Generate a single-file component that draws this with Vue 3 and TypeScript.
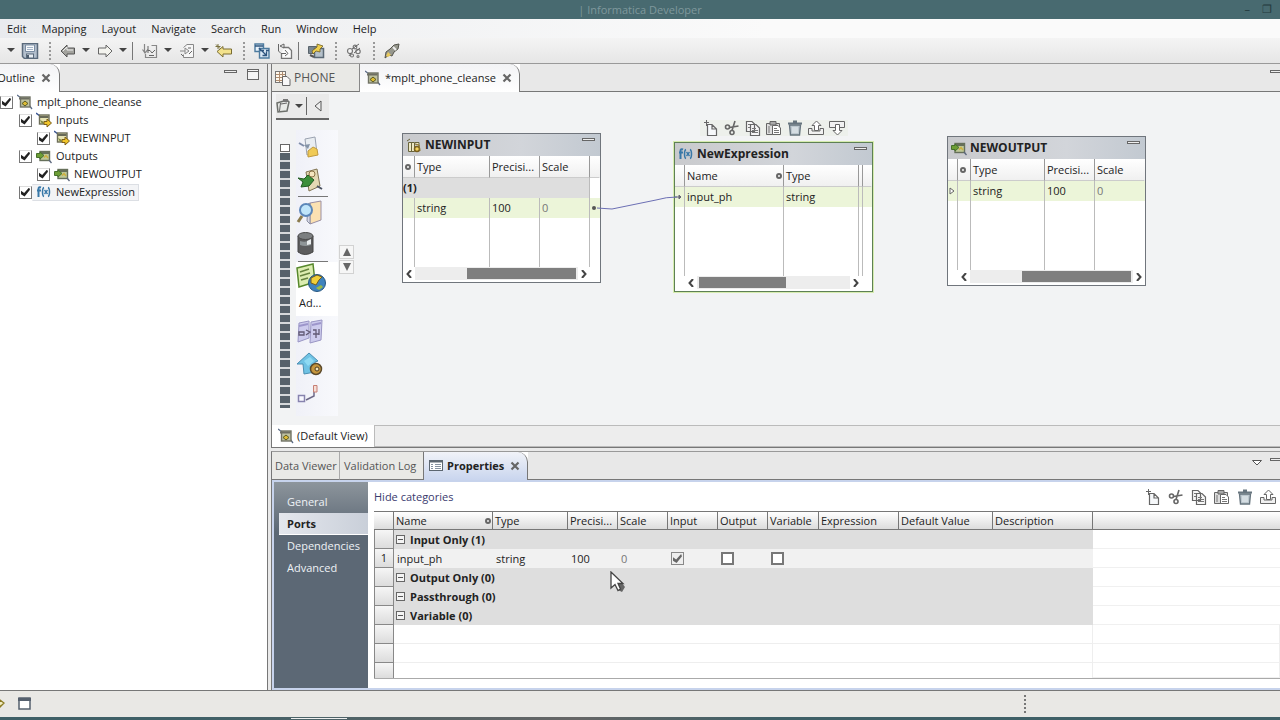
<script setup lang="ts">
import { ref } from 'vue'

interface TreeItem { label: string; icon: string; depth: number; selected?: boolean }
interface Tool { icon: string; label: string; lead?: string; caret?: boolean; small?: boolean }
interface Column { label: string; width: number; sort?: boolean; gutter?: boolean }
interface NodeCard {
  id: string; title: string; icon: string; x: number; y: number; active?: boolean
  columns: Column[]; group?: string; cells: string[]; inset: string; thumb: { left: number; width: number }
}

const menus = ['Edit', 'Mapping', 'Layout', 'Navigate', 'Search', 'Run', 'Window', 'Help']

const tools: Tool[] = [
  { icon: 'save', label: 'Save' },
  { icon: 'back', label: 'Back', lead: 'dots', caret: true },
  { icon: 'forward', label: 'Forward', caret: true },
  { icon: 'page-down', label: 'Next annotation', lead: 'line', caret: true },
  { icon: 'page-up', label: 'Previous annotation', caret: true },
  { icon: 'last-edit', label: 'Last edit location' },
  { icon: 'iconize', label: 'Iconize', lead: 'dots' },
  { icon: 'restore', label: 'Restore' },
  { icon: 'run-map', label: 'Arrange', lead: 'line' },
  { icon: 'link', label: 'Auto link', lead: 'dots' },
  { icon: 'rocket', label: 'Search', lead: 'dots' },
]

const tree: TreeItem[] = [
  { label: 'mplt_phone_cleanse', icon: 'mapplet', depth: 0 },
  { label: 'Inputs', icon: 'input', depth: 1 },
  { label: 'NEWINPUT', icon: 'input', depth: 2 },
  { label: 'Outputs', icon: 'output', depth: 1 },
  { label: 'NEWOUTPUT', icon: 'output', depth: 2 },
  { label: 'NewExpression', icon: 'fx', depth: 1, selected: true },
]
const shown = ref<boolean[]>(tree.map(() => true))

const nodes: NodeCard[] = [
  {
    id: 'in', title: 'NEWINPUT', icon: 'input-port', x: 130, y: 41,
    columns: [
      { label: '', width: 12, sort: true }, { label: 'Type', width: 75 }, { label: 'Precisi...', width: 50 },
      { label: 'Scale', width: 50 }, { label: '', width: 10, gutter: true },
    ],
    group: '(1)', cells: ['', 'string', '100', '0', 'dot'], inset: 'end', thumb: { left: 52, width: 109 },
  },
  {
    id: 'ex', title: 'NewExpression', icon: 'fx', x: 402, y: 50, active: true,
    columns: [
      { label: '', width: 10, gutter: true }, { label: 'Name', width: 99, sort: true }, { label: 'Type', width: 75 },
      { label: '', width: 4 }, { label: '', width: 9, gutter: true },
    ],
    cells: ['arrow', 'input_ph', 'string', '', ''], inset: 'both', thumb: { left: 2, width: 87 },
  },
  {
    id: 'out', title: 'NEWOUTPUT', icon: 'output', x: 675, y: 44,
    columns: [
      { label: '', width: 10, gutter: true }, { label: '', width: 13, sort: true }, { label: 'Type', width: 74 },
      { label: 'Precisi...', width: 50 }, { label: 'Scale', width: 50 },
    ],
    cells: ['tri', '', 'string', '100', '0'], inset: 'start', thumb: { left: 52, width: 109 },
  },
]

const editTools = [
  ['new', 'New'], ['cut', 'Cut'], ['copy', 'Copy'], ['paste', 'Paste'], ['trash', 'Delete'], ['up', 'Move up'], ['down', 'Move down'],
]
const palette = [
  { icon: 'p-object', label: 'Data object' }, { icon: 'p-map', label: 'Mapplet', rule: true },
  { icon: 'p-lookup', label: 'Lookup' }, { icon: 'p-db', label: 'Database', rule: true },
]
const paletteMore = [
  { icon: 'p-compare', label: 'Comparison' }, { icon: 'p-house', label: 'Address' }, { icon: 'p-route', label: 'Router' },
]

const categories = ['General', 'Ports', 'Dependencies', 'Advanced']
const current = ref('Ports')

const portColumns = [
  ['Name', 99], ['Type', 75], ['Precisi...', 50], ['Scale', 50], ['Input', 50], ['Output', 50],
  ['Variable', 51], ['Expression', 80], ['Default Value', 94], ['Description', 100],
] as [string, number][]
const groups = ['Output Only (0)', 'Passthrough (0)', 'Variable (0)']
const inputFlag = ref(true)
const outputFlag = ref(false)
const variableFlag = ref(false)
</script>

<template>
  <svg class="defs" aria-hidden="true">
    <symbol id="i-close" viewBox="0 0 10 10"><path d="M1.500 1.500L8.500 8.500M8.500 1.500L1.500 8.500" stroke="#666" stroke-width="2.200" /></symbol>
    <symbol id="i-min" viewBox="0 0 14 14"><rect x=".5" y="2.500" width="12" height="2" fill="#eee" stroke="#666" /></symbol>
    <symbol id="i-max" viewBox="0 0 14 14"><rect x="1.500" y="1.500" width="11" height="10" fill="#f4f4f4" stroke="#666" /><path d="M1 3.500H13" stroke="#666" /></symbol>
    <symbol id="i-caret" viewBox="0 0 8 5"><path d="M0 0H8L4 4Z" fill="#444" /></symbol>
    <symbol id="i-save" viewBox="0 0 16 16"><path d="M.5 .5H15.500V15.500H2.500L.5 13.500Z" fill="#b3bfcd" stroke="#5a6a7c" stroke-width="1.500" /><path d="M3.500 2H12.500V8.500H3.500Z" fill="#f8fafc" stroke="#7b8da3" /><path d="M5 4.500H11M5 6.500H11" stroke="#a3b4c8" /><rect x="4.500" y="11" width="7" height="4" fill="#e8edf3" stroke="#5a6a7c" /><rect x="5" y="12" width="2" height="3" fill="#4c5c6e" /></symbol>
    <symbol id="i-back" viewBox="0 0 16 16"><path d="M1 8L7 2V5H14.500V11H7V14Z" fill="#a3a39e" stroke="#555" /><path d="M3 8L7 4V7H13" stroke="#eee" fill="none" /></symbol>
    <symbol id="i-forward" viewBox="0 0 16 16"><path d="M15 8L9 2V5H1.500V11H9V14Z" fill="#f3f3ee" stroke="#666" /></symbol>
    <symbol id="i-page-down" viewBox="0 0 16 16"><path d="M9.500 2.500H14.500V14.500H3.500V11M2.500 1V9M.5 6.500L3 10L6 6.500" fill="none" stroke="#888" stroke-width="1.200" /><path d="M6 3V10M6 7.500H8L10 10L13 7M7 12.500H12" fill="none" stroke="#666" /></symbol>
    <symbol id="i-page-up" viewBox="0 0 16 16"><path d="M4.500 4.500L8 1.500H14.500V14.500H4.500V11.500M1 8H6M6 5V11L10 8Z" fill="#f6f6f6" stroke="#888" /><path d="M9 5H12M10 11L13 8M2 11L4 13" stroke="#666" /></symbol>
    <symbol id="i-last-edit" viewBox="0 0 18 16"><path d="M2 8.500L8 3.500V6H16.500V11H8V14Z" fill="#f3e28c" stroke="#7a6d32" /><path d="M3 1V6M.5 3.500H5.500M1 1.500L5 5.500" stroke="#7b7340" /></symbol>
    <symbol id="i-iconize" viewBox="0 0 16 16"><path d="M1 1H9.500V8.500H1Z" fill="#e8f2fb" stroke="#4d7b9f" stroke-width="1.400" /><path d="M5.500 5.500H15V15H5.500Z" fill="#d9e7f4" stroke="#4d7b9f" stroke-width="1.400" /><path d="M5 5L12.500 12.500M12.500 8.500V12.500H8.500M1 3H9M6 7.500H10M12 7.500H15" stroke="#2f557f" stroke-width="1.300" fill="none" /></symbol>
    <symbol id="i-restore" viewBox="0 0 16 16"><path d="M6.500 4.500H11.500L14.500 7.500V15.500H4.500V11" fill="#fbfbfb" stroke="#777" stroke-width="1.300" /><path d="M1.500 1V8L4 10.500H9M3 3L7 1V5ZM8 7L11 10.500L8 13" stroke="#666" fill="none" /></symbol>
    <symbol id="i-run-map" viewBox="0 0 16 16"><path d="M.5 3.500H8.500V10.500H.5Z" fill="#7a8791" stroke="#5a646c" /><path d="M6.500 5.500H15.500V14.500H6.500Z" fill="#b5c0ca" stroke="#5a6875" stroke-width="1.500" /><path d="M4 8L9 4V1L15 3L12 6V9L8 8L5 11Z" fill="#efcf4d" stroke="#6d5e25" stroke-width=".8" /><path d="M2 12L6 14" stroke="#555" stroke-width="2" /></symbol>
    <symbol id="i-link" viewBox="0 0 16 16"><g fill="#f5f5f5" stroke="#777" stroke-width="1.200"><circle cx="4" cy="8" r="2.500" /><circle cx="9" cy="4" r="1.800" /><circle cx="12" cy="8.500" r="2.200" /><circle cx="6" cy="12.500" r="1.500" /><circle cx="12" cy="13.500" r="1" /></g><path d="M6 6L13 1M8 10L14 5M3 13L5 10" stroke="#666" /></symbol>
    <symbol id="i-rocket" viewBox="0 0 16 16"><path d="M1 15L2 9L6 6L10 2L15 1L14 6L10 9L8 13L5 12Z" fill="#96978d" stroke="#55554d" /><path d="M4 9L7 12L4 14L2 13Z" fill="#e9c95b" /><path d="M9 4L12 7" stroke="#eee" stroke-width="2" /></symbol>
    <symbol id="i-mapplet" viewBox="0 0 16 16"><path d="M0 1L4 4M12 11L15 15" stroke="#5c6c88" stroke-width="1.300" /><rect x="3.500" y="3" width="9.500" height="10" fill="#bfc2a0" stroke="#717365" stroke-width="1.400" /><path d="M2 4.500H12.500" stroke="#6d6e62" stroke-width="2" /><path d="M5 9.500L8 7L11 9.500L8 12Z" fill="#dcbb34" stroke="#5a5a22" /></symbol>
    <symbol id="i-input" viewBox="0 0 16 16"><path d="M0 1L4 4" stroke="#3c5794" stroke-width="1.500" /><rect x="3.500" y="3" width="9.500" height="9" fill="#e7e4b4" stroke="#6c6d58" stroke-width="1.400" /><path d="M4 5H12.500" stroke="#686a58" stroke-width="2" /><path d="M4 8L8 10L6 12Z" fill="#7b8740" /><path d="M8 9.500H11V7L15.500 11L11 15V12.500H8Z" fill="#f0c52b" stroke="#7d5f19" /></symbol>
    <symbol id="i-input-port" viewBox="0 0 16 16"><path d="M1 4L4 2M2.500 5.500H8.500V14.500H2.500ZM5.500 6V14M9 5.500H13V9" fill="#eee8c4" stroke="#69643c" /><circle cx="11" cy="12" r="2.500" fill="#f3d35d" stroke="#785e1d" stroke-width="1.500" /><path d="M9 7L13 8L14 14" stroke="#8c7226" fill="none" /></symbol>
    <symbol id="i-output" viewBox="0 0 16 16"><rect x="4" y="3.500" width="9.500" height="9" fill="#bec897" stroke="#66705a" stroke-width="1.400" /><path d="M13 12L15.500 15" stroke="#5b667c" stroke-width="1.300" /><path d="M5 5H13" stroke="#66705a" stroke-width="2" /><path d="M.5 5.500H4V4L8 7.500L4 11V9.500H.5Z" fill="#6d9e35" stroke="#47702c" /><path d="M8 9.500L10 7.500L12 10" stroke="#cdb03d" stroke-width="1.500" fill="none" /></symbol>
    <symbol id="i-fx" viewBox="0 0 16 16"><g fill="none" stroke="#3878a8"><path d="M5 3.500Q2.500 2.500 2.500 5V13M1 6.500H5" stroke-width="2" /><path d="M8 3.500Q6.500 4 6.500 8Q6.500 12 8 12.500M12 3.500Q13.500 4 13.500 8Q13.500 12 12 12.500" stroke-width="1.500" /><path d="M8.500 6L11.500 10M11.500 6L8.500 10" stroke-width="1.300" /></g></symbol>
    <symbol id="i-sheet" viewBox="0 0 16 16"><rect x=".5" y="1.500" width="10" height="11" fill="#fff8ec" stroke="#777" /><path d="M1 4.500H10M1 7.500H10M1 10.500H7M4.500 2V12M7.500 2V12" stroke="#af8c6f" /><path d="M7.500 6.500H12L15 9.500V15.500H7.500Z" fill="#f8f8f8" stroke="#666" /></symbol>
    <symbol id="i-props" viewBox="0 0 14 14"><rect x=".5" y="1.500" width="13" height="10" fill="#fff" stroke="#5c6670" /><path d="M0 2.500H14" stroke="#5c6670" stroke-width="2" /><path d="M2 5.500H4M2 7.500H4M2 9.500H4M6 5.500H12M6 7.500H12M6 9.500H12" stroke="#8792a0" /></symbol>
    <symbol id="i-new" viewBox="0 0 16 16"><path d="M4.500 4.500H9L13.500 9V15.500H4.500ZM9 5V9H13" fill="#f6f8fa" stroke="#666" stroke-width="1.200" /><path d="M3.500 0V6M1 2.500H6" stroke="#666" /></symbol>
    <symbol id="i-cut" viewBox="0 0 16 16"><g fill="none" stroke="#666" stroke-width="1.600"><circle cx="3.500" cy="7" r="2" /><circle cx="8" cy="12.500" r="2" /><path d="M5.500 7.500L14.500 6M8 10.500L11 1" /></g></symbol>
    <symbol id="i-copy" viewBox="0 0 16 16"><path d="M1.500 1.500H7L9.500 4V11.500H1.500ZM5.500 4.500H11L14.500 8V15.500H5.500Z" fill="#f7f7f7" stroke="#666" stroke-width="1.200" /><path d="M7 8.500H11M7 10.500H13M7 12.500H13M3 4.500H5M3 7.500H5" stroke="#777" /></symbol>
    <symbol id="i-paste" viewBox="0 0 16 16"><path d="M.5 3.500H13.500V14.500H.5Z" fill="#ddd" stroke="#666" /><path d="M4 1.500H10V5H4Z" fill="#aaa" stroke="#666" /><path d="M6.500 5.500H12L14.500 8V14.500H6.500Z" fill="#fff" stroke="#666" /><path d="M8 8.500H11M8 10.500H13M8 12.500H13M3 6V13" stroke="#777" /></symbol>
    <symbol id="i-trash" viewBox="0 0 16 16"><path d="M2.500 5H13.500L12.500 15H3.500Z" fill="#bdc8cf" stroke="#66747e" stroke-width="1.400" /><path d="M1 3.500H15M6 1.500H10" stroke="#66747e" stroke-width="2" /><path d="M6 7V13M8 7V13M10 7V13" stroke="#edf3f6" /></symbol>
    <symbol id="i-up" viewBox="0 0 16 16"><path d="M.5 8.500H4V11H12V8.500H15.500V14.500H.5Z" fill="#f1f1f1" stroke="#666" /><path d="M8.500 1L13 5.500H10.500V10.500H6.500V5.500H4Z" fill="#fff" stroke="#666" /></symbol>
    <symbol id="i-down" viewBox="0 0 16 16"><path d="M.5 1.500H15.500V7.500H.5Z" fill="#f1f1f1" stroke="#666" /><path d="M8.500 15L13 10.500H10.500V4.500H6.500V10.500H4Z" fill="#fff" stroke="#666" /></symbol>
    <symbol id="i-select" viewBox="0 0 16 16"><path d="M1 5L11 2L13 4L11 13L2 14Z" fill="#e9ebe8" stroke="#6d706c" stroke-width="1.500" /><path d="M4.500 5L3.500 13M5 6L11 5" stroke="#666" /><path d="M7 1H12V4H7Z" fill="#777" /></symbol>
    <symbol id="i-p-object" viewBox="0 0 30 28"><path d="M9 5L19 3L21 19L11 21Z" fill="#e9edf2" stroke="#9aa2b0" /><path d="M3 9L8 12" stroke="#7f8da8" stroke-width="2" /><path d="M8 11L14 10L12 15Z" fill="#8594a8" /><path d="M12 17L17 13L21 15L22 21L12 23Z" fill="#f0ca56" stroke="#c09a40" /></symbol>
    <symbol id="i-p-map" viewBox="0 0 30 28"><path d="M10 6L21 3L24 20L13 25Z" fill="#e4d9b4" stroke="#807352" /><path d="M2 12L8 13L12 9L18 14L13 20L5 21L7 16Z" fill="#3c8f3a" stroke="#215b21" /><circle cx="16" cy="8" r="3" fill="#f5e6bf" stroke="#8b7446" /><path d="M21 20L26 23" stroke="#4b5261" stroke-width="2" /></symbol>
    <symbol id="i-p-lookup" viewBox="0 0 30 28"><path d="M14 4L25 2V21L14 25Z" fill="#fbe1b2" stroke="#9b8fa3" /><path d="M12 5L14 4V25L11 22Z" fill="#d8d9e8" stroke="#8b8fa3" /><circle cx="10" cy="11" r="6" fill="#bfe5fa" stroke="#5c87b9" stroke-width="2" /><path d="M6 17L2 23" stroke="#8a7b4c" stroke-width="3" /></symbol>
    <symbol id="i-p-db" viewBox="0 0 30 28"><path d="M2 5V21Q9 26 17 21V5Z" fill="#5c5c5e" stroke="#444" /><ellipse cx="9.500" cy="5" rx="7.500" ry="3.500" fill="#7c7f81" stroke="#4c4c4c" /><path d="M4 10Q9 12 15 9V14Q9 16 4 14Z" fill="#8f9598" /><path d="M11 10L15 8V13L11 14Z" fill="#e9ecee" /></symbol>
    <symbol id="i-p-address" viewBox="0 0 30 30"><path d="M1 5L17 1L19 19L3 24Z" fill="#dcedb1" stroke="#57882d" stroke-width="1.500" /><path d="M4 9L13 6M4 13L14 10M5 17L12 15" stroke="#64823f" stroke-width="1.500" /><circle cx="21" cy="20" r="8.500" fill="#3f83bd" stroke="#245580" /><path d="M15 15L21 12L26 14L23 17L20 22L15 20Z" fill="#f0cf38" stroke="#715d20" /><path d="M20 25L25 22L27 24L23 27Z" fill="#99bb46" /></symbol>
    <symbol id="i-p-compare" viewBox="0 0 30 28"><path d="M3 5L13 3V20L2 24ZM15 4L26 2L25 22L14 25Z" fill="#cdcbed" stroke="#9a96c4" /><path d="M3 8L12 6M16 7L25 5" stroke="#9d96cb" stroke-width="2" /><path d="M3 14H8V17H3ZM10 12L14 14L10 17M17 12H20V20M17 16H23M23 11V17" stroke="#625a74" fill="none" stroke-width="1.300" /></symbol>
    <symbol id="i-p-house" viewBox="0 0 30 28"><path d="M1 14L13 3L22 11L19 12V22L8 24L7 14Z" fill="#6fc2e4" stroke="#4a8fb2" /><path d="M8 11L14 7L18 11L12 16Z" fill="#8edaf3" /><circle cx="20" cy="19" r="5.500" fill="#c6963d" stroke="#5c4a2c" stroke-width="1.500" /><circle cx="21" cy="19" r="2" fill="#f5e4b5" stroke="#4c3b21" /></symbol>
    <symbol id="i-p-route" viewBox="0 0 30 28"><path d="M2.500 13.500H8.500V19.500H2.500Z" fill="#f8f8ff" stroke="#8783ae" stroke-width="1.500" /><path d="M10 18L18 14V7" stroke="#6e6a89" stroke-width="1.500" fill="none" /><path d="M17.500 3.500H21V10H17.500Z" fill="#f6ded6" stroke="#c67f74" /></symbol>
    <symbol id="i-pin" viewBox="0 0 10 10"><path d="M5 1L9 4L5 8L4 4ZM0 4H5" fill="#f2edc2" stroke="#8b7b22" stroke-width="1.300" /></symbol>
  </svg>

  <div class="app">
    <header class="titlebar">
      <span class="title">| Informatica Developer</span>
      <span class="window-buttons">
        <button aria-label="Minimize window">–</button>
        <button aria-label="Restore window">❐</button>
      </span>
    </header>

    <nav class="menubar" aria-label="Main menu">
      <button v-for="m in menus" :key="m">{{ m }}</button>
    </nav>

    <div class="toolbar" role="toolbar" aria-label="Main toolbar">
      <button class="drop" aria-label="New menu"><svg><use href="#i-caret" /></svg></button>
      <template v-for="t in tools" :key="t.icon">
        <span v-if="t.lead" :class="['sep', t.lead]"></span>
        <button class="tool" :aria-label="t.label"><svg><use :href="'#i-' + t.icon" /></svg></button>
        <button v-if="t.caret" class="drop" :aria-label="t.label + ' menu'"><svg><use href="#i-caret" /></svg></button>
      </template>
    </div>

    <main class="workspace">
      <aside class="panel outline">
        <div class="tabs">
          <div class="tab active outline-tab"><span>Outline</span><button aria-label="Close Outline"><svg class="close"><use href="#i-close" /></svg></button></div>
          <div class="tab-rest">
            <button aria-label="Minimize"><svg class="ctl"><use href="#i-min" /></svg></button>
            <button aria-label="Maximize"><svg class="ctl"><use href="#i-max" /></svg></button>
          </div>
        </div>
        <ul class="tree">
          <li v-for="(item, i) in tree" :key="i" :class="'depth' + item.depth">
            <input :id="'tree' + i" v-model="shown[i]" class="check" type="checkbox" />
            <label :for="'tree' + i" :class="{ selected: item.selected }">
              <svg class="ic"><use :href="'#i-' + item.icon" /></svg><span>{{ item.label }}</span>
            </label>
          </li>
        </ul>
      </aside>

      <div class="work-column">
        <section class="panel editor">
          <div class="tabs">
            <button class="tab phone"><svg class="ic"><use href="#i-sheet" /></svg><span>PHONE</span></button>
            <div class="tab active file-tab">
              <svg class="ic"><use href="#i-mapplet" /></svg><span>*mplt_phone_cleanse</span>
              <button aria-label="Close mplt_phone_cleanse"><svg class="close"><use href="#i-close" /></svg></button>
            </div>
            <div class="tab-rest edge"><button aria-label="Minimize editor"><svg class="ctl"><use href="#i-min" /></svg></button></div>
          </div>

          <div class="canvas">
            <div class="palette-area">
              <div class="palette-bar">
                <button aria-label="Select"><svg class="ic"><use href="#i-select" /></svg></button>
                <button class="drop" aria-label="Selection menu"><svg><use href="#i-caret" /></svg></button>
                <span class="bar-line"></span>
                <button aria-label="Collapse palette"><svg class="collapse" viewBox="0 0 8 12"><path d="M7 1V11L1 6Z" fill="#eee" stroke="#555" /></svg></button>
              </div>
              <div class="palette-body">
                <div class="ruler"><span class="ruler-head"></span><span class="ruler-bars"></span></div>
                <div class="palette-list">
                  <template v-for="p in palette" :key="p.icon">
                    <button class="pal" :aria-label="p.label"><svg><use :href="'#i-' + p.icon" /></svg></button>
                    <span v-if="p.rule" class="rule"></span>
                  </template>
                  <button class="pal chosen"><svg><use href="#i-p-address" /></svg><span>Ad...</span></button>
                  <button v-for="p in paletteMore" :key="p.icon" class="pal" :aria-label="p.label"><svg><use :href="'#i-' + p.icon" /></svg></button>
                </div>
                <div class="stepper">
                  <button aria-label="Scroll up"><svg viewBox="0 0 8 8"><path d="M4 0L8 8H0Z" fill="#666" /></svg></button>
                  <button aria-label="Scroll down"><svg viewBox="0 0 8 8"><path d="M4 8L8 0H0Z" fill="#666" /></svg></button>
                </div>
              </div>
            </div>

            <div class="node-tools" role="toolbar" aria-label="Node tools">
              <button v-for="e in editTools" :key="e[0]" :aria-label="e[1]"><svg class="ic"><use :href="'#i-' + e[0]" /></svg></button>
            </div>

            <article v-for="n in nodes" :key="n.id" :class="['node', { active: n.active }]" :style="{ left: n.x + 'px', top: n.y + 'px' }">
              <header>
                <svg class="ic"><use :href="'#i-' + n.icon" /></svg><strong>{{ n.title }}</strong>
                <button :aria-label="'Iconize ' + n.title"><svg class="ctl"><use href="#i-min" /></svg></button>
              </header>
              <table>
                <colgroup><col v-for="(c, i) in n.columns" :key="i" :style="{ width: c.width + 'px' }" /></colgroup>
                <thead><tr><th v-for="(c, i) in n.columns" :key="i" :class="{ gutter: c.gutter }"><span class="cell">{{ c.label }}<i v-if="c.sort" class="sort"></i></span></th></tr></thead>
                <tbody>
                  <tr v-if="n.group" class="group"><td :colspan="4">{{ n.group }}</td><td></td></tr>
                  <tr class="row">
                    <td v-for="(c, i) in n.cells" :key="i" :class="{ gutter: n.columns[i].gutter, faint: c === '0' }">
                      <svg v-if="c === 'dot'" class="port" viewBox="0 0 8 8"><circle cx="4" cy="4" r="2" fill="#555" /></svg>
                      <svg v-else-if="c === 'arrow'" class="port" viewBox="0 0 8 8"><path d="M0 4H6M4 2L6 4L4 6Z" fill="#667" stroke="#667" /></svg>
                      <svg v-else-if="c === 'tri'" class="port" viewBox="0 0 8 8"><path d="M2 1V7L6 4Z" fill="#fff" stroke="#666" /></svg>
                      <template v-else>{{ c }}</template>
                    </td>
                  </tr>
                  <tr :class="['filler', { short: n.group }]"><td v-for="(c, i) in n.columns" :key="i" :class="{ gutter: c.gutter }"></td></tr>
                </tbody>
              </table>
              <div :class="['scroll', 'inset-' + n.inset]">
                <button aria-label="Scroll left"><svg viewBox="0 0 6 8"><path d="M5 0L1.500 4L5 8" fill="none" stroke="#444" stroke-width="2" /></svg></button>
                <span class="track"><span class="thumb" :style="{ marginLeft: n.thumb.left + 'px', width: n.thumb.width + 'px' }"></span></span>
                <button aria-label="Scroll right"><svg viewBox="0 0 6 8"><path d="M1 0L4.500 4L1 8" fill="none" stroke="#444" stroke-width="2" /></svg></button>
              </div>
            </article>

            <svg class="wire" viewBox="0 0 82 16"><path d="M1 14L16 15L60 6Q70 3 81 3" fill="none" stroke="#6c6fb4" /></svg>
          </div>

          <footer class="views">
            <button><svg class="ic"><use href="#i-mapplet" /></svg><span>(Default View)</span></button>
            <span class="views-rest"></span>
          </footer>
        </section>

        <section class="panel properties">
          <div class="tabs">
            <button class="tab plain viewer">Data Viewer</button>
            <button class="tab plain log">Validation Log</button>
            <div class="tab active prop-tab">
              <svg class="ic small"><use href="#i-props" /></svg><strong>Properties</strong>
              <button aria-label="Close Properties"><svg class="close"><use href="#i-close" /></svg></button>
            </div>
            <div class="tab-rest edge">
              <button aria-label="View menu"><svg class="view-menu" viewBox="0 0 10 6"><path d="M.5 .5H9.500L5 5Z" fill="#fff" stroke="#555" /></svg></button>
              <button aria-label="Minimize properties"><svg class="ctl"><use href="#i-min" /></svg></button>
            </div>
          </div>

          <div class="prop-body">
            <nav class="cats" aria-label="Property categories">
              <button v-for="c in categories" :key="c" :class="{ current: c === current }" @click="current = c">{{ c }}</button>
            </nav>
            <div class="sheet">
              <div class="sheet-head">
                <a href="#">Hide categories</a>
                <div class="sheet-tools">
                  <button v-for="e in editTools.slice(0, 6)" :key="e[0]" :aria-label="e[1]"><svg class="ic"><use :href="'#i-' + e[0]" /></svg></button>
                </div>
              </div>
              <table class="ports">
                <colgroup><col class="num" /><col v-for="c in portColumns" :key="c[0]" :style="{ width: c[1] + 'px' }" /><col /></colgroup>
                <thead>
                  <tr><th></th><th v-for="c in portColumns" :key="c[0]"><span class="cell">{{ c[0] }}<i v-if="c[0] === 'Name'" class="sort"></i></span></th><th></th></tr>
                </thead>
                <tbody>
                  <tr class="group"><th></th><td colspan="10"><span class="g"><i class="fold"></i>Input Only (1)</span></td><td></td></tr>
                  <tr class="data">
                    <th>1</th><td>input_ph</td><td>string</td><td>100</td><td class="faint">0</td>
                    <td><input v-model="inputFlag" class="check grey" type="checkbox" aria-label="Input" /></td>
                    <td><input v-model="outputFlag" class="check box" type="checkbox" aria-label="Output" /></td>
                    <td><input v-model="variableFlag" class="check box" type="checkbox" aria-label="Variable" /></td>
                    <td></td><td></td><td></td><td></td>
                  </tr>
                  <tr v-for="g in groups" :key="g" class="group"><th></th><td colspan="10"><span class="g"><i class="fold"></i>{{ g }}</span></td><td></td></tr>
                  <tr v-for="k in 2" :key="k" class="blank"><th></th><td colspan="10"></td><td></td></tr>
                  <tr class="blank last"><th></th><td colspan="10"></td><td></td></tr>
                </tbody>
              </table>
            </div>
          </div>
        </section>
      </div>
    </main>

    <footer class="status">
      <svg class="pin"><use href="#i-pin" /></svg>
      <button aria-label="Show view"><svg viewBox="0 0 14 14"><rect x="1" y="1" width="11" height="11" fill="#fff" stroke="#55606e" stroke-width="1.500" /><path d="M0 2.500H13" stroke="#55606e" stroke-width="3" /></svg></button>
      <span class="grip"></span>
    </footer>
    <div class="taskbar"><span></span></div>

    <svg class="pointer" viewBox="0 0 16 22"><path d="M6 12L12 12L15 16L12 21L8 19Z" fill="#666" /><path d="M1 1V17L5 13.500L8 19.500L10.500 18L8 12.500H13Z" fill="#fff" stroke="#444" stroke-width="1.300" /></svg>
  </div>
</template>

<style>
body { margin: 0; overflow: hidden; }
</style>

<style scoped>
* { box-sizing: border-box; }
.app {
  display: flex; flex-direction: column; height: 100vh; overflow: hidden; position: relative;
  background: #e9e9e9; color: #222; font: 11px/18px "Open Sans", "Noto Sans", sans-serif;
}
.defs { position: absolute; width: 0; height: 0; }
button { font: inherit; color: inherit; background: none; border: 0; padding: 0; margin: 0; display: flex; align-items: center; white-space: nowrap; }
svg { display: block; flex: none; }
.ic { width: 16px; height: 16px; }
.ic.small { width: 14px; height: 14px; }
.ctl { width: 14px; height: 14px; }
.close { width: 10px; height: 10px; }

.titlebar { display: flex; height: 19px; flex: none; background: #486a70; color: #7f989c; position: relative; justify-content: center; align-items: center; }
.window-buttons { position: absolute; right: 8px; top: 0; display: flex; gap: 12px; color: #23393d; height: 18px; }
.menubar { display: flex; flex: none; height: 19px; gap: 15px; padding-left: 7px; background: linear-gradient(90deg, #e9ebee, #fafafa 60%); }
.toolbar { display: flex; flex: none; height: 26px; align-items: center; padding-left: 4px; background: linear-gradient(#f4f4f4, #e6e6e6); border-bottom: 1px solid #999; }
.tool svg { width: 18px; height: 16px; }
.tool { width: 21px; justify-content: center; margin: 0 1px; }
.drop svg { width: 8px; height: 5px; }
.drop { width: 8px; margin: 0 3px; }
.sep { height: 18px; flex: none; }
.sep.dots { width: 2px; margin: 0 5px 0 8px; border-left: 2px dotted #999; }
.sep.line { width: 1px; margin: 0 5px 0 2px; background: #777; }

.workspace { flex: 1; min-height: 0; display: flex; gap: 3px; border-bottom: 1px solid #777; }
.panel { display: flex; flex-direction: column; background: #fff; border: 0 solid #777; }
.outline { width: 268px; flex: none; border-right-width: 1px; }
.work-column { flex: 1; min-width: 0; display: flex; flex-direction: column; gap: 3px; }
.editor { height: 384px; flex: none; border-left-width: 1px; border-bottom-width: 1px; }
.properties { flex: 1; min-height: 0; border-left-width: 1px; border-top: 1px solid #999; }

.tabs { display: flex; height: 28px; flex: none; }
.tab { display: flex; align-items: center; padding: 0 6px; gap: 4px; border-bottom: 1px solid #777; background: #e9e9e6; color: #555; }
.tab.active { background: linear-gradient(#f2f3f5, #fff); border: 0; border-right: 1px solid #777; border-top-right-radius: 10px; color: #222; }
.tab-rest { flex: 1; display: flex; justify-content: flex-end; align-items: flex-start; gap: 8px; padding: 4px 7px 0 0; background: #e8e8e8; border-bottom: 1px solid #777; }
.tab-rest.edge { padding-right: 0; margin-right: -4px; }
.tab.outline-tab { width: 60px; padding: 0 8px 0 0; gap: 6px; justify-content: flex-end; }
.tab.phone { width: 88px; padding: 0 0 0 3px; gap: 3px; border-right: 1px solid #888; font-size: 12px; }
.tab.file-tab { width: 160px; padding: 0 7px 0 5px; }
.file-tab button { margin-left: auto; }
.tab.viewer { width: 68px; padding: 0 3px; border-right: 1px solid #aaa; }
.tab.log { width: 84px; padding: 0 4px; border-right: 1px solid #777; }
.tab.prop-tab { width: 104px; padding: 0 7px 0 5px; background: linear-gradient(#f1f3f8, #c9d5ee); }
.prop-tab button { margin-left: auto; }
.view-menu { width: 10px; height: 6px; margin-top: 4px; }

.tree { list-style: none; margin: 0; padding: 1px 0 0 0; }
.tree li { display: flex; align-items: center; height: 18px; }
.depth1 { padding-left: 19px; }
.depth2 { padding-left: 37px; }
.tree label { display: flex; align-items: center; gap: 4px; padding: 0 3px 0 4px; height: 17px; }
.tree label.selected { background: #f3f4f6; border: 1px solid #dcdfe4; border-left-color: #f3f4f6; padding-left: 3px; }
.check { appearance: none; width: 13px; height: 13px; margin: 0; flex: none; border: 1px solid #777; border-top-color: #ddd; background: #fff; display: grid; place-items: center; }
.check:checked::before { content: ""; width: 9px; height: 9px; background: #222; clip-path: polygon(0 35%, 35% 60%, 90% 0, 100% 25%, 40% 100%, 0 75%); }
.check.grey { border-color: #888; background: #eee; }
.check.grey:checked::before { background: #666; }
.check.box { border: 2px solid #777; }

.canvas { position: relative; flex: 1; min-height: 0; background: #f2f3f4; }
.palette-area { width: 84px; padding: 2px 0 0 4px; }
.palette-bar { display: flex; align-items: center; height: 26px; width: 53px; gap: 3px; background: #eaeaea; border-bottom: 2px solid #666; }
.palette-bar .drop { margin: 0; }
.bar-line { width: 1px; height: 18px; background: #666; }
.collapse { width: 8px; height: 12px; margin-left: 4px; }
.palette-body { display: flex; padding: 10px 0 0 4px; }
.ruler { width: 10px; padding-top: 14px; display: flex; flex-direction: column; }
.ruler-head { height: 8px; border: 1px solid #666; background: #fff; }
.ruler-bars { height: 255px; margin-top: 1px; background: repeating-linear-gradient(#56616a 0 7px, #d5d8da 7px 9px); }
.palette-list { width: 42px; margin-left: 6px; padding: 2px 0 4px 0; background: linear-gradient(90deg, #f0f1f8, #f8f9fc); display: flex; flex-direction: column; }
.pal { height: 32px; }
.pal svg { width: 30px; height: 28px; }
.pal.chosen { flex-direction: column; align-items: flex-start; height: 54px; background: #fff; }
.pal.chosen svg { height: 32px; }
.pal.chosen span { padding-left: 3px; }
.rule { width: 30px; height: 1px; margin-left: 2px; background: #777; }
.stepper { display: flex; flex-direction: column; justify-content: center; gap: 1px; padding-bottom: 28px; margin-left: 1px; }
.stepper button { width: 15px; height: 14px; justify-content: center; background: #f6f6f6; border: 1px solid #d2d2d2; flex: none; }
.stepper svg { width: 8px; height: 8px; }
.node-tools { position: absolute; left: 428px; top: 28px; display: flex; gap: 5px; padding: 0 3px; background: #edf0eb; }
.wire { position: absolute; left: 324px; top: 102px; width: 82px; height: 16px; }

.node { position: absolute; width: 199px; height: 150px; display: flex; flex-direction: column; background: #fff; border: 1px solid #70757c; }
.node.active { border-color: #5e8055; box-shadow: 0 0 0 1px #d6ecae; }
.node header { display: flex; height: 22px; flex: none; align-items: center; gap: 3px; padding: 0 4px 0 3px; background: linear-gradient(90deg, #c9cacd, #d2d5da 60%, #c2c9d1); color: #222; font-size: 12px; }
.node header button { margin-left: auto; align-self: flex-start; margin-top: 2px; }
table { border-collapse: separate; border-spacing: 0; table-layout: fixed; width: 100%; }
th { font-weight: 400; text-align: left; padding: 0; }
td { padding: 0; }
.cell { display: flex; align-items: center; justify-content: space-between; }
.sort { width: 6px; height: 6px; border: 2px solid #666; border-radius: 50%; margin-right: 1px; flex: none; }
.node th { height: 22px; background: linear-gradient(#fff, #f0f0f0); border-right: 1px solid #999; border-bottom: 1px solid #ccc; padding-left: 2px; white-space: nowrap; overflow: hidden; }
.node td { border-right: 1px solid #bbb; padding-left: 2px; white-space: nowrap; overflow: hidden; }
.node td:last-child, .node th:last-child { border-right-color: transparent; }
.node .gutter { padding: 0; }
.node .group td { height: 20px; background: #dedede; font-weight: 700; padding-left: 0; }
.node .group td:last-child { background: #fff; }
.node .row td { height: 20px; background: #ecf5d9; }
.node .filler td { height: 69px; }
.node .filler.short td { height: 49px; }
.node .faint, .ports .faint { color: #777; }
.port { width: 8px; height: 8px; }
.scroll { display: flex; align-items: center; height: 13px; flex: none; background: #ededed; }
.scroll.inset-end { margin-right: 10px; }
.scroll.inset-start { margin-left: 10px; }
.scroll.inset-both { margin: 0 10px; }
.scroll button { width: 12px; height: 13px; justify-content: center; background: #fff; flex: none; }
.scroll button svg { width: 6px; height: 8px; }
.track { flex: 1; display: flex; }
.thumb { height: 11px; background: #7f7f7f; }

.views { display: flex; height: 22px; flex: none; background: #fff; }
.views button { width: 102px; padding-left: 6px; gap: 3px; }
.views-rest { flex: 1; border: 1px solid #bbb; border-width: 1px 0 1px 1px; background: #ededed; }

.prop-body { flex: 1; min-height: 0; display: flex; border: 2px solid #c7d3ec; border-right: 0; }
.cats { width: 94px; flex: none; padding: 9px 0 0 5px; background: linear-gradient(#8d959c, #5c6875 50px); color: #eef2f6; }
.cats button { width: 100%; height: 22px; padding-left: 8px; }
.cats .current { background: linear-gradient(90deg, #e4e7ed, #c9cfd9); color: #222; font-weight: 700; border-bottom: 1px solid #fff; }
.sheet { flex: 1; min-width: 0; padding-left: 6px; background: #fff; overflow: hidden; }
.sheet-head { display: flex; height: 29px; align-items: center; justify-content: space-between; padding-right: 4px; }
.sheet-head a { color: #3a3a6e; text-decoration: none; }
.sheet-tools { display: flex; gap: 7px; }
.ports { border-bottom: 1px solid #aaa; border-top: 1px solid #777; }
.num { width: 20px; }
.ports thead th { height: 18px; background: linear-gradient(#fff, #dcdcdc); border-right: 1px solid #777; border-bottom: 1px solid #777; padding-left: 2px; line-height: 17px; white-space: nowrap; }
.ports thead th:last-child { border-right: 0; }
.ports tbody th { height: 19px; text-align: center; border: 1px solid #888; border-top: 0; background: linear-gradient(#f6f6f6, #dcdcdc); line-height: 18px; }
.ports tbody td { height: 19px; line-height: 18px; padding-left: 3px; }
.ports .group td { background: #dedede; font-weight: 700; color: #222; }
.ports .data td { background: #f1f1f1; }
.ports tr td:last-child { background: #fff; border-bottom: 1px solid #f0f0f0; }
.ports .blank td { border-bottom: 1px solid #eee; border-right: 1px solid #eee; }
.ports .last th, .ports .last td { height: 15px; border-bottom: 0; line-height: 14px; }
.g { display: flex; align-items: center; gap: 5px; }
.fold { width: 9px; height: 9px; border: 1px solid #666; margin-left: -1px; background: linear-gradient(#555, #555) center / 5px 1px no-repeat #f4f4f4; }

.status { display: flex; align-items: center; height: 26px; flex: none; background: #e9e8e5; }
.pin { width: 10px; height: 10px; margin-left: -5px; }
.status button { margin-left: 13px; }
.status button svg { width: 14px; height: 14px; }
.grip { margin-left: auto; margin-right: 254px; width: 2px; height: 18px; border-left: 2px dotted #777; }
.taskbar { height: 3px; flex: none; background: linear-gradient(90deg, #3f6067 15%, #666 45%, #3f6067 60%); display: flex; }
.taskbar span { width: 56px; height: 1px; margin: 1px 0 0 291px; background: #eee; }
.pointer { position: absolute; left: 610px; top: 571px; width: 16px; height: 22px; pointer-events: none; }
</style>
